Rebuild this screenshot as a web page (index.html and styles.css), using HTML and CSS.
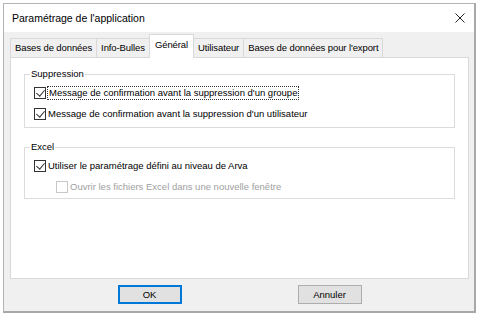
FILE: index.html
```html
<!DOCTYPE html>
<html lang="fr">
<head>
    <meta charset="UTF-8">
    <title>Paramétrage de l'application</title>
    <link rel="stylesheet" href="styles.css">
</head>
<body>

    <!-- Dialog window -->
    <div class="window">
        <div class="titlebar">
            <span class="title">Paramétrage de l'application</span>
            <svg class="close" width="10" height="10" viewBox="0 0 10 10">
                <path d="M0.5 0.5 L9.5 9.5 M9.5 0.5 L0.5 9.5" stroke="#222" stroke-width="1" fill="none"/>
            </svg>
        </div>

        <div class="body">
            <!-- Tabs -->
            <ul class="tabs">
                <li>Bases de données</li>
                <li>Info-Bulles</li>
                <li class="active">Général</li>
                <li>Utilisateur</li>
                <li>Bases de données pour l'export</li>
            </ul>

            <div class="tab-page">
                <fieldset class="group">
                    <legend>Suppression</legend>
                    <label class="check"><span class="box checked"></span><span class="focus">Message de confirmation avant la suppression d'un groupe</span></label>
                    <label class="check"><span class="box checked"></span><span>Message de confirmation avant la suppression d'un utilisateur</span></label>
                </fieldset>

                <fieldset class="group excel">
                    <legend>Excel</legend>
                    <label class="check"><span class="box checked"></span><span>Utiliser le paramétrage défini au niveau de Arva</span></label>
                    <label class="check sub disabled"><span class="box"></span><span>Ouvrir les fichiers Excel dans une nouvelle fenêtre</span></label>
                </fieldset>
            </div>

            <!-- Buttons -->
            <div class="buttons">
                <button class="btn default">OK</button>
                <button class="btn">Annuler</button>
            </div>
        </div>
    </div>

</body>
</html>
```

FILE: styles.css
```css
* {
    margin: 0;
    padding: 0;
    box-sizing: border-box;
}

body {
    background: #ffffff;
    font-family: "Liberation Sans", Arial, sans-serif;
    font-size: 9.5px;
    color: #000;
}

/* Window frame */
.window {
    margin: 3px 0 0 3px;
    width: 473px;
    height: 310px;
    border: 1px solid #b4b4b4;
    border-right: 2px solid #a8a8a8;
    border-bottom: 2px solid #a8a8a8;
    display: flex;
    flex-direction: column;
}

.titlebar {
    height: 28px;
    background: #fff;
    display: flex;
    align-items: center;
    justify-content: space-between;
    padding: 0 9px 0 8px;
}

.title {
    font-size: 10.5px;
}

.body {
    flex: 1;
    background: #f0f0f0;
    padding: 2px 5px 0 6px;
    display: flex;
    flex-direction: column;
}

/* Tabs */
.tabs {
    list-style: none;
    display: flex;
    height: 23px;
    align-items: flex-end;
    position: relative;
    z-index: 1;
}

.tabs li {
    height: 19px;
    line-height: 17px;
    padding: 0 4px;
    border: 1px solid #d9d9d9;
    border-bottom: none;
    border-right: none;
    background: #f0f0f0;
    white-space: nowrap;
    letter-spacing: -0.1px;
}

.tabs li:last-child {
    border-right: 1px solid #d9d9d9;
}

.tabs li.active {
    height: 24px;
    line-height: 19px;
    padding: 0 5px;
    background: #fff;
    border-right: 1px solid #d9d9d9;
    margin-bottom: -1px;
}

.tabs li.active + li {
    border-left: none;
}

.tab-page {
    height: 222px;
    background: #fff;
    border: 1px solid #d9d9d9;
    padding: 10px 13px 0 13px;
}

/* Group boxes */
.group {
    border: 1px solid #dcdcdc;
    padding: 2px 0 0 9px;
    margin-bottom: 13px;
    height: 60px;
}

.group.excel {
    height: 58px;
}

.group legend {
    padding: 0 1px;
    margin-left: -4px;
    line-height: 12px;
}

.check {
    display: flex;
    align-items: center;
    height: 21px;
    white-space: nowrap;
}

.check.sub {
    padding-left: 22px;
}

.box {
    width: 12px;
    height: 12px;
    border: 1px solid #333;
    background: #fff;
    margin-right: 2px;
    position: relative;
    flex-shrink: 0;
}

.box.checked::after {
    content: "";
    position: absolute;
    left: 3px;
    top: 0px;
    width: 4px;
    height: 7px;
    border: solid #333;
    border-width: 0 1.2px 1.2px 0;
    transform: rotate(40deg);
}

.focus {
    outline: 1px dotted #333;
    padding: 0 1px;
    line-height: 12px;
}

.disabled {
    color: #a0a0a0;
}

.disabled .box {
    border-color: #c8c8c8;
}

/* Buttons */
.buttons {
    flex: 1;
    display: flex;
    justify-content: center;
    align-items: center;
    gap: 116px;
    padding-bottom: 1px;
}

.btn {
    width: 64px;
    height: 19px;
    background: #e1e1e1;
    border: 1px solid #adadad;
    font-family: inherit;
    font-size: 9.5px;
    color: #000;
}

.btn.default {
    border: 1px solid #0078d7;
    outline: 1px solid #0078d7;
    outline-offset: -2px;
}
```
